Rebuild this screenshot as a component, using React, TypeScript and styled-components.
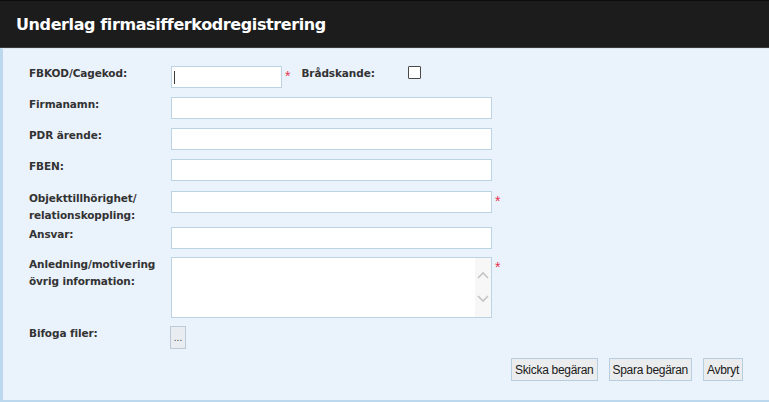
import styled, { createGlobalStyle } from "styled-components";

const Global = createGlobalStyle`
  html, body {
    margin: 0;
    padding: 0;
    background: #eaf2fb;
  }
  body {
    font-family: "DejaVu Sans", Verdana, sans-serif;
  }
`

export default function App(){
  return (
    <Page>
      <Global />
      <Header>
        <Title>Underlag firmasifferkodregistrering</Title>
      </Header>
      <Body>
        <Row $space={9}>
          <Label>FBKOD/Cagekod:</Label>
          <TextInput $width={111} $caret defaultValue="" />
          <Required>*</Required>
          <InlineLabel>Brådskande:</InlineLabel>
          <Checkbox />
        </Row>
        <Row $space={9}>
          <Label>Firmanamn:</Label>
          <TextInput />
        </Row>
        <Row $space={9}>
          <Label>PDR ärende:</Label>
          <TextInput />
        </Row>
        <Row $space={10}>
          <Label>FBEN:</Label>
          <TextInput />
        </Row>
        <Row $space={3}>
          <Label>Objekttillhörighet/<br />relationskoppling:</Label>
          <TextInput />
          <Required>*</Required>
        </Row>
        <Row $space={8}>
          <Label>Ansvar:</Label>
          <TextInput />
        </Row>
        <Row $space={8}>
          <Label>Anledning/motivering<br />övrig information:</Label>
          <AreaBox>
            <Area />
            <ScrollRail>
              <svg width="12" height="8" viewBox="0 0 12 8">
                <path d="M1 7 L6 2 L11 7" fill="none" stroke="#c4c4c4" strokeWidth="1.6" />
              </svg>
              <svg width="12" height="8" viewBox="0 0 12 8">
                <path d="M1 1 L6 6 L11 1" fill="none" stroke="#c4c4c4" strokeWidth="1.6" />
              </svg>
            </ScrollRail>
          </AreaBox>
          <Required>*</Required>
        </Row>
        <Row $space={9}>
          <Label>Bifoga filer:</Label>
          <BrowseButton>...</BrowseButton>
        </Row>
        <Actions>
          <Button>Skicka begäran</Button>
          <Button>Spara begäran</Button>
          <Button>Avbryt</Button>
        </Actions>
      </Body>
    </Page>
  )
}

const Page = styled.div`
  width: 769px;
  height: 402px;
  display: flex;
  flex-direction: column;
  overflow: hidden;
`
const Header = styled.div`
  height: 46px;
  background-color: #1c1c1c;
  border-top: 1px solid #0c0c0c;
  border-bottom: 1px solid #3a3a3a;
  display: flex;
  align-items: center;
  padding-left: 16px;
`
const Title = styled.h1`
  margin: 0;
  color: #ffffff;
  font-size: 16px;
  font-weight: bold;
  font-family: "DejaVu Sans", Verdana, sans-serif;
  letter-spacing: -0.4px;
`
const Body = styled.div`
  flex: 1;
  background-color: #eaf2fb;
  border-left: 3px solid #bcd8ee;
  border-bottom: 2px solid #bcd8ee;
  border-top: 1px solid #dbe8f4;
  padding: 17px 26px 0 26px;
  display: flex;
  flex-direction: column;
`
const Row = styled.div<{ $space: number }>`
  display: flex;
  align-items: flex-start;
  margin-bottom: ${p => p.$space}px;
`
const Label = styled.div`
  width: 142px;
  flex-shrink: 0;
  margin-top: -1px;
  font-size: 10.5px;
  line-height: 17px;
  font-weight: bold;
  color: #333333;
  letter-spacing: -0.1px;
`
const InlineLabel = styled(Label)`
  width: auto;
  margin-left: 11px;
  margin-right: 33px;
`
const TextInput = styled.input<{ $width?: number; $caret?: boolean }>`
  box-sizing: border-box;
  width: ${p => p.$width ?? 321}px;
  height: 22px;
  margin: 0;
  border: 1px solid #bcd3e4;
  background-color: #ffffff;
  background-image: ${p => p.$caret ? "linear-gradient(#3a3a3a, #3a3a3a)" : "none"};
  background-repeat: no-repeat;
  background-position: 2px 4px;
  background-size: 1px 13px;
  outline: none;
  padding: 0 4px;
  font-size: 12px;
`
const Required = styled.span`
  color: #e8334f;
  font-size: 14px;
  line-height: 14px;
  margin-left: 3px;
  margin-top: 3px;
  font-family: "Liberation Sans", Arial, sans-serif;
`
const Checkbox = styled.span`
  display: block;
  width: 11px;
  height: 11px;
  border: 1px solid #4a4a4a;
  border-radius: 1px;
  background: #ffffff;
`
const AreaBox = styled.div`
  box-sizing: border-box;
  width: 321px;
  height: 61px;
  border: 1px solid #bcd3e4;
  background: #ffffff;
  display: flex;
`
const Area = styled.div`
  flex: 1;
`
const ScrollRail = styled.div`
  width: 16px;
  background: #f7f7f7;
  display: flex;
  flex-direction: column;
  align-items: center;
  padding-top: 13px;
  gap: 16px;
`
const BrowseButton = styled.button`
  box-sizing: border-box;
  width: 16px;
  height: 23px;
  margin: 0 0 0 -1px;
  padding: 0;
  border: 1px solid #bcc9d4;
  background: #e9edf1;
  color: #444;
  font-size: 10px;
  font-family: "Liberation Sans", Arial, sans-serif;
  line-height: 18px;
`
const Actions = styled.div`
  display: flex;
  justify-content: flex-end;
  gap: 11px;
`
const Button = styled.button`
  box-sizing: border-box;
  height: 23px;
  padding: 0 3px;
  margin: 0;
  border: 1px solid #b7cde0;
  background: #eaecee;
  color: #1a1a1a;
  font-size: 12px;
  letter-spacing: -0.3px;
  font-family: "Liberation Sans", Arial, sans-serif;
`
